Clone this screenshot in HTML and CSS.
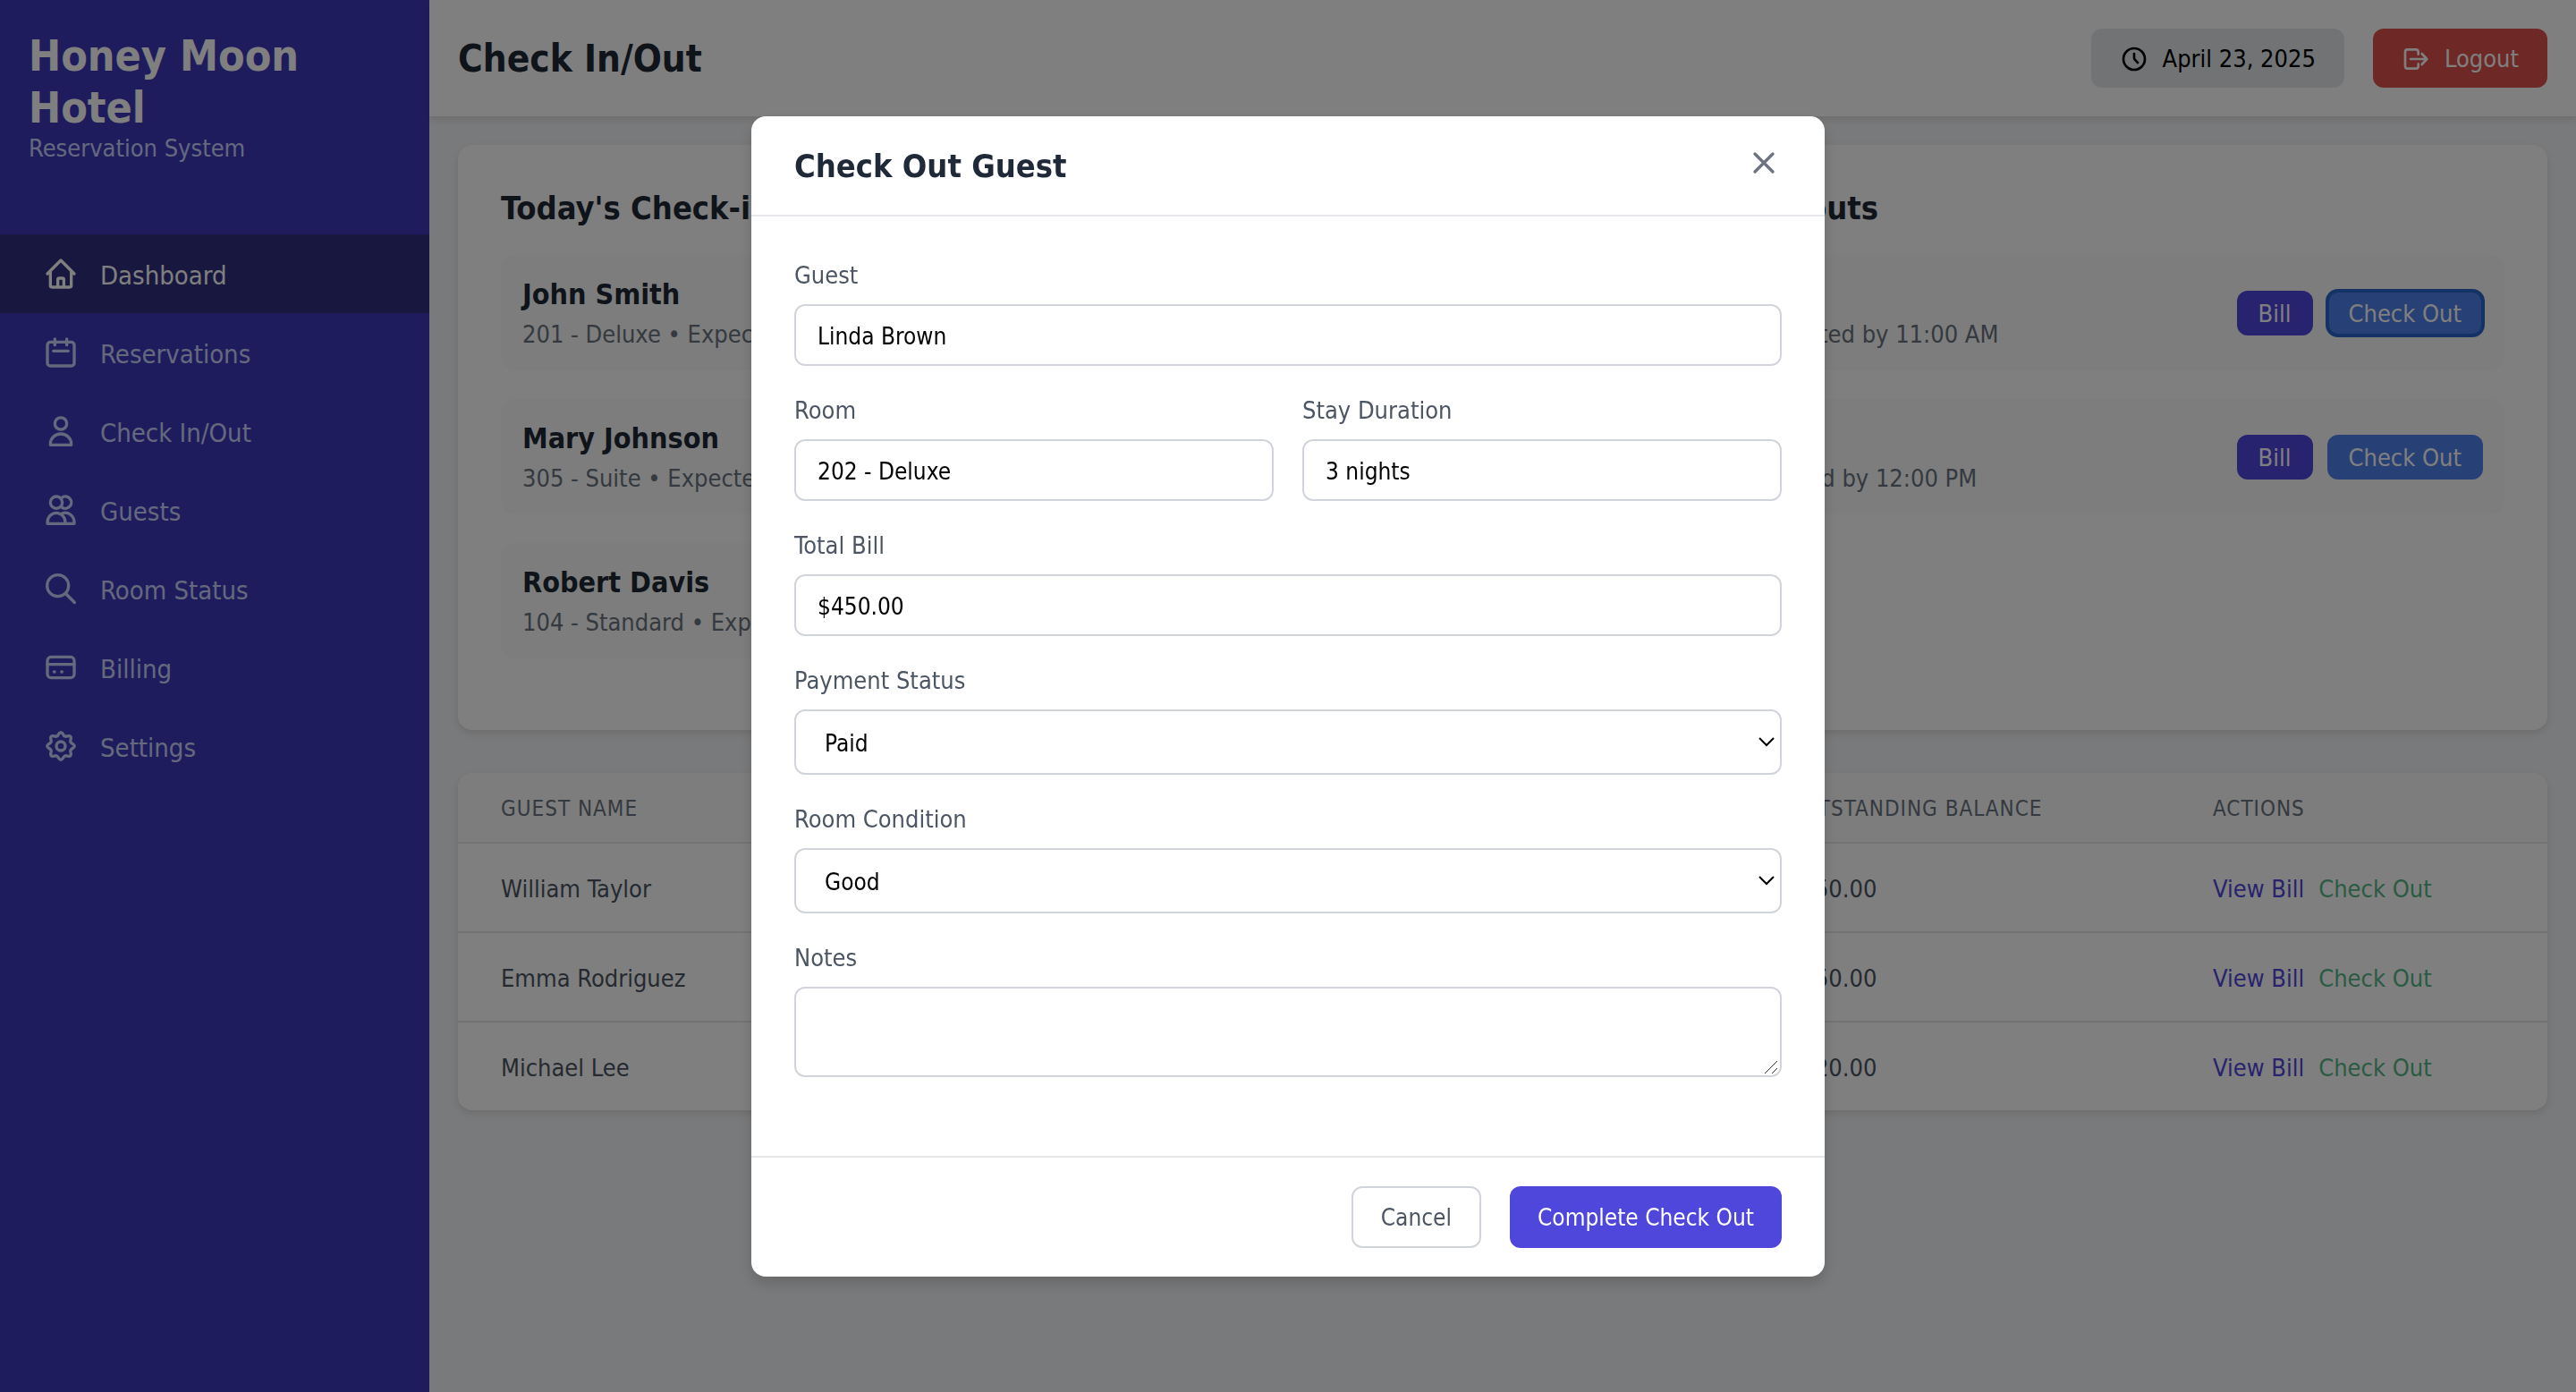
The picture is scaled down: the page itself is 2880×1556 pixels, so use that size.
FILE: index.html
```html
<!DOCTYPE html>
<html lang="en">
<head>
<meta charset="utf-8">
<meta name="viewport" content="width=device-width, initial-scale=1">
<title>Honey Moon Hotel - Check In/Out</title>
<link rel="stylesheet" href="styles.css">
</head>
<body>
<div class="app">
  <aside class="sidebar">
    <div class="brand">
      <h1 class="brand-name">Honey Moon Hotel</h1>
      <p class="brand-sub">Reservation System</p>
    </div>
    <nav class="nav">
      <a class="nav-item active" href="#dashboard">
        <svg class="icon" viewBox="0 0 24 24" aria-hidden="true"><path d="M3 12l9-9 9 9M5 10.500V20a1 1 0 0 0 1 1h12a1 1 0 0 0 1-1v-9.500M10 21v-5a1 1 0 0 1 1-1h2a1 1 0 0 1 1 1v5"/></svg>
        <span class="nav-label">Dashboard</span>
      </a>
      <a class="nav-item" href="#reservations">
        <svg class="icon" viewBox="0 0 24 24" aria-hidden="true"><rect x="3" y="5" width="18" height="16" rx="2"/><path d="M8 3v4M16 3v4M7 11h10"/></svg>
        <span class="nav-label">Reservations</span>
      </a>
      <a class="nav-item" href="#check-in-out">
        <svg class="icon" viewBox="0 0 24 24" aria-hidden="true"><circle cx="12" cy="6.900" r="4"/><path d="M5 21.200v-.800a7 6.600 0 0 1 14 0v.800z"/></svg>
        <span class="nav-label">Check In/Out</span>
      </a>
      <a class="nav-item" href="#guests">
        <svg class="icon" viewBox="0 0 24 24" aria-hidden="true"><circle cx="9" cy="7" r="4"/><path d="M12.500 3.900A4 4 0 1 1 12.500 10.100M3 21.200v-.800a6 6.400 0 0 1 12 0v.800zM13 14.300a6 6.400 0 0 1 8 6.100v.800h-6"/></svg>
        <span class="nav-label">Guests</span>
      </a>
      <a class="nav-item" href="#room-status">
        <svg class="icon" viewBox="0 0 24 24" aria-hidden="true"><circle cx="10" cy="10" r="7.200"/><path d="M15.300 15.300l5.900 6"/></svg>
        <span class="nav-label">Room Status</span>
      </a>
      <a class="nav-item" href="#billing">
        <svg class="icon" viewBox="0 0 24 24" aria-hidden="true"><rect x="3" y="5" width="18" height="14" rx="2.500"/><path d="M3 10h18M7.500 15h.300M12.500 15h.300"/></svg>
        <span class="nav-label">Billing</span>
      </a>
      <a class="nav-item" href="#settings">
        <svg class="icon" viewBox="0 0 24 24" aria-hidden="true"><circle cx="12" cy="12" r="3"/><path d="M19.900 10.400Q22.400 12 19.900 13.600Q17.800 14.400 18.700 16.500Q19.350 19.350 16.500 18.700Q14.400 17.800 13.600 19.900Q12 22.400 10.400 19.900Q9.600 17.800 7.500 18.700Q4.650 19.350 5.300 16.500Q6.200 14.400 4.100 13.600Q1.600 12 4.100 10.400Q6.200 9.600 5.300 7.500Q4.650 4.650 7.500 5.300Q9.600 6.200 10.400 4.100Q12 1.600 13.600 4.100Q14.400 6.200 16.500 5.300Q19.350 4.650 18.700 7.500Q17.800 9.600 19.900 10.400z"/></svg>
        <span class="nav-label">Settings</span>
      </a>
    </nav>
  </aside>

  <div class="page">
    <header class="topbar">
      <h2 class="page-title">Check In/Out</h2>
      <div class="topbar-actions">
        <button class="top-btn date" type="button">
          <svg class="icon small" viewBox="0 0 24 24" aria-hidden="true"><circle cx="12" cy="12" r="9"/><path d="M12 7.500v3.500a2 2 0 0 0 .600 1.400L15 15"/></svg>
          April 23, 2025
        </button>
        <button class="top-btn logout" type="button">
          <svg class="icon small" viewBox="0 0 24 24" aria-hidden="true"><path d="M14 8V6a2 2 0 0 0-2-2H5a2 2 0 0 0-2 2v12a2 2 0 0 0 2 2h7a2 2 0 0 0 2-2v-2M7.500 12H21M17 7.500l4.200 4.500-4.200 4.500"/></svg>
          Logout
        </button>
      </div>
    </header>

    <main class="content">
      <div class="cards">
        <section class="card">
          <h3 class="card-title">Today's Check-ins</h3>
          <ul class="stay-list">
            <li class="stay"><div><h4 class="stay-name">John Smith</h4><p class="stay-info">201 - Deluxe • Expected by 2:00 PM</p></div></li>
            <li class="stay"><div><h4 class="stay-name">Mary Johnson</h4><p class="stay-info">305 - Suite • Expected by 3:30 PM</p></div></li>
            <li class="stay"><div><h4 class="stay-name">Robert Davis</h4><p class="stay-info">104 - Standard • Expected by 5:00 PM</p></div></li>
          </ul>
        </section>
        <section class="card">
          <h3 class="card-title">Today's Check-outs</h3>
          <ul class="stay-list">
            <li class="stay">
              <div><h4 class="stay-name">Linda Brown</h4><p class="stay-info">202 - Deluxe • Expected by 11:00 AM</p></div>
              <div class="stay-actions"><button class="btn bill" type="button">Bill</button><button class="btn out current" type="button">Check Out</button></div>
            </li>
            <li class="stay">
              <div><h4 class="stay-name">James Wilson</h4><p class="stay-info">301 - Suite • Expected by 12:00 PM</p></div>
              <div class="stay-actions"><button class="btn bill" type="button">Bill</button><button class="btn out" type="button">Check Out</button></div>
            </li>
          </ul>
        </section>
      </div>

      <div class="table-card">
        <table class="guests">
          <colgroup><col><col><col><col><col class="col-balance"><col class="col-actions"></colgroup>
          <thead>
            <tr><th>Guest Name</th><th>Room</th><th>Check-in</th><th>Check-out</th><th>Outstanding Balance</th><th>Actions</th></tr>
          </thead>
          <tbody>
            <tr><td>William Taylor</td><td>103</td><td>Apr 20</td><td>Apr 25</td><td>$150.00</td><td><div class="row-actions"><button class="text-btn view" type="button">View Bill</button><button class="text-btn leave" type="button">Check Out</button></div></td></tr>
            <tr><td>Emma Rodriguez</td><td>205</td><td>Apr 21</td><td>Apr 26</td><td>$250.00</td><td><div class="row-actions"><button class="text-btn view" type="button">View Bill</button><button class="text-btn leave" type="button">Check Out</button></div></td></tr>
            <tr><td>Michael Lee</td><td>302</td><td>Apr 22</td><td>Apr 24</td><td>$320.00</td><td><div class="row-actions"><button class="text-btn view" type="button">View Bill</button><button class="text-btn leave" type="button">Check Out</button></div></td></tr>
          </tbody>
        </table>
      </div>
    </main>
  </div>
</div>

<div class="overlay">
  <form class="modal" role="dialog" aria-modal="true" aria-labelledby="modal-title">
    <div class="modal-head">
      <h3 class="modal-title" id="modal-title">Check Out Guest</h3>
      <button class="close" type="button" aria-label="Close"><svg class="icon" viewBox="0 0 24 24" aria-hidden="true"><path d="M6 6l12 12M18 6L6 18"/></svg></button>
    </div>
    <div class="modal-body">
      <div class="field">
        <label for="guest">Guest</label>
        <input class="control" id="guest" type="text" value="Linda Brown" readonly>
      </div>
      <div class="field-row">
        <div class="field">
          <label for="room">Room</label>
          <input class="control" id="room" type="text" value="202 - Deluxe" readonly>
        </div>
        <div class="field">
          <label for="stay">Stay Duration</label>
          <input class="control" id="stay" type="text" value="3 nights" readonly>
        </div>
      </div>
      <div class="field">
        <label for="total">Total Bill</label>
        <input class="control" id="total" type="text" value="$450.00" readonly>
      </div>
      <div class="field">
        <label for="payment">Payment Status</label>
        <div class="control-wrap">
          <select class="control select" id="payment"><option>Paid</option><option>Pending</option></select>
          <svg class="chevron" viewBox="0 0 18 12" aria-hidden="true"><path d="M1 2l8 8 8-8"/></svg>
        </div>
      </div>
      <div class="field">
        <label for="condition">Room Condition</label>
        <div class="control-wrap">
          <select class="control select" id="condition"><option>Good</option><option>Needs Cleaning</option></select>
          <svg class="chevron" viewBox="0 0 18 12" aria-hidden="true"><path d="M1 2l8 8 8-8"/></svg>
        </div>
      </div>
      <div class="field">
        <label for="notes">Notes</label>
        <div class="control-wrap">
          <textarea class="control notes" id="notes"></textarea>
          <svg class="grip" viewBox="0 0 16 16" aria-hidden="true"><path d="M1 15L15 1M9 15l6-6"/></svg>
        </div>
      </div>
    </div>
    <div class="modal-foot">
      <button class="foot-btn cancel" type="button">Cancel</button>
      <button class="foot-btn complete" type="submit">Complete Check Out</button>
    </div>
  </form>
</div>
</body>
</html>
```
FILE: styles.css
```css
* {
  box-sizing: border-box;
  margin: 0;
  padding: 0;
}

body {
  font-family: "DejaVu Sans Condensed", "DejaVu Sans", sans-serif;
  font-size: 27px;
  line-height: 34px;
  background: #f3f4f6;
}

button,
input,
select,
textarea {
  font: inherit;
  border: 0;
}

button {
  cursor: pointer;
}

.icon {
  display: block;
  width: 40px;
  height: 40px;
  flex: none;
  fill: none;
  stroke: currentColor;
  stroke-width: 2;
  stroke-linecap: round;
  stroke-linejoin: round;
}

.icon.small {
  width: 32px;
  height: 32px;
}

.app {
  display: flex;
  min-height: 100vh;
}

/* Sidebar */
.sidebar {
  width: 480px;
  flex: none;
  background: #3f38bd;
  color: #c8d2fb;
}

.brand {
  padding: 33px 32px;
  margin-bottom: 46px;
}

.brand-name {
  font-size: 48px;
  line-height: 58px;
  color: #fff;
}

.nav-item {
  display: flex;
  align-items: center;
  gap: 24px;
  padding: 24px 48px;
  color: inherit;
  text-decoration: none;
}

.nav-item.active {
  background: #302e7e;
  color: #fff;
}

.nav-label {
  padding-top: 4px;
  font-size: 29px;
  line-height: 36px;
}

/* Top bar */
.page {
  flex: 1;
  min-width: 0;
}

.topbar {
  display: flex;
  justify-content: space-between;
  align-items: center;
  padding: 32px;
  background: #fff;
  box-shadow: 0 4px 8px rgba(0, 0, 0, 0.1);
}

.page-title {
  padding-top: 2px;
  font-size: 42px;
  line-height: 48px;
  color: #1f2937;
}

.topbar-actions {
  display: flex;
  gap: 32px;
}

.top-btn {
  display: flex;
  align-items: center;
  gap: 16px;
  padding: 17px 32px 15px;
  border-radius: 12px;
}

.top-btn.date {
  background: #e5e7eb;
  color: #000;
}

.top-btn.logout {
  background: #dd524c;
  color: #fff;
}

/* Arrivals and departures */
.content {
  padding: 32px;
}

.cards {
  display: grid;
  grid-template-columns: 1fr 1fr;
  gap: 48px;
  margin-bottom: 48px;
}

.card {
  padding: 48px;
  background: #fff;
  border-radius: 16px;
  box-shadow: 0 4px 8px rgba(0, 0, 0, 0.1);
}

.card-title {
  margin-bottom: 29px;
  font-size: 36px;
  line-height: 46px;
  color: #1f2937;
}

.stay-list {
  list-style: none;
}

.stay {
  display: flex;
  justify-content: space-between;
  align-items: center;
  margin-bottom: 32px;
  padding: 24px;
  background: #f8fbf9;
  border-radius: 16px;
}

.stay-name {
  margin-bottom: 8px;
  font-size: 32px;
  line-height: 41px;
  color: #1f2937;
}

.stay-info {
  line-height: 32px;
  color: #6b7280;
}

.stay-actions {
  display: flex;
  gap: 16px;
}

.btn {
  padding: 9px 24px 7px;
  border-radius: 12px;
  color: #fff;
}

.btn.bill {
  background: #4f46dc;
}

.btn.out {
  background: #4f80ea;
}

.btn.current {
  outline: 4px solid #2b65cb;
  outline-offset: -2px;
}

/* Guest table */
.table-card {
  overflow: hidden;
  background: #fff;
  border-radius: 16px;
  box-shadow: 0 4px 8px rgba(0, 0, 0, 0.1);
}

.guests {
  width: 100%;
  table-layout: fixed;
  border-spacing: 0;
}

.col-balance {
  width: 476px;
}

.col-actions {
  width: 422px;
}

.guests th {
  padding: 26px 48px 22px;
  border-bottom: 2px solid #e5e7eb;
  background: #f8fbf9;
  font-size: 24px;
  line-height: 29px;
  font-weight: normal;
  letter-spacing: 1px;
  text-align: left;
  text-transform: uppercase;
  white-space: nowrap;
  color: #6b7280;
}

.guests td {
  padding: 34px 48px 30px;
  border-bottom: 2px solid #e5e7eb;
  color: #4b5563;
}

.guests tr:last-child td {
  border-bottom: 0;
}

.row-actions {
  display: flex;
  gap: 16px;
  white-space: nowrap;
}

.text-btn {
  background: none;
}

.text-btn.view {
  color: #4f46dc;
}

.text-btn.leave {
  color: #54b686;
}

/* Dialog */
.overlay {
  position: fixed;
  inset: 0;
  display: flex;
  justify-content: center;
  align-items: center;
  background: rgba(0, 0, 0, 0.5);
}

.modal {
  width: 1200px;
  max-width: 90%;
  background: #fff;
  border-radius: 16px;
  box-shadow: 0 8px 16px rgba(0, 0, 0, 0.15);
}

.modal-head {
  display: flex;
  justify-content: space-between;
  align-items: flex-start;
  padding: 32px 48px 30px;
  border-bottom: 2px solid #e5e7eb;
}

.modal-title {
  font-size: 36px;
  line-height: 48px;
  color: #1f2937;
}

.close {
  background: none;
  color: #6b7280;
}

.modal-body {
  padding: 48px 48px 56px;
}

.field {
  margin-bottom: 32px;
}

.field-row {
  display: grid;
  grid-template-columns: 1fr 1fr;
  gap: 32px;
}

.field label {
  display: block;
  margin-bottom: 14px;
  line-height: 36px;
  color: #4b5563;
}

.control {
  display: block;
  width: 100%;
  height: 69px;
  padding: 18px 24px 14px;
  border: 2px solid #d1d5db;
  border-radius: 12px;
  background: #fff;
  font-size: 26px;
  color: #000;
}

.control-wrap {
  position: relative;
}

.select {
  height: 73px;
  padding: 18px 32px 14px;
  appearance: none;
}

.notes {
  height: 101px;
  resize: none;
}

.chevron {
  position: absolute;
  top: 30px;
  right: 8px;
  width: 18px;
  height: 12px;
  fill: none;
  stroke: #000;
  stroke-width: 2;
}

.grip {
  position: absolute;
  right: 4px;
  bottom: 3px;
  width: 16px;
  height: 16px;
  fill: none;
  stroke: #333;
  stroke-width: 1;
}

.modal-foot {
  display: flex;
  justify-content: flex-end;
  gap: 32px;
  padding: 32px 48px;
  border-top: 2px solid #e5e7eb;
}

.foot-btn {
  height: 69px;
  padding: 2px 31px 0;
  border-radius: 12px;
  font-size: 26px;
}

.foot-btn.cancel {
  border: 2px solid #d1d5db;
  background: #fff;
  color: #4b5563;
}

.foot-btn.complete {
  background: #4f46dc;
  color: #fff;
}
```
